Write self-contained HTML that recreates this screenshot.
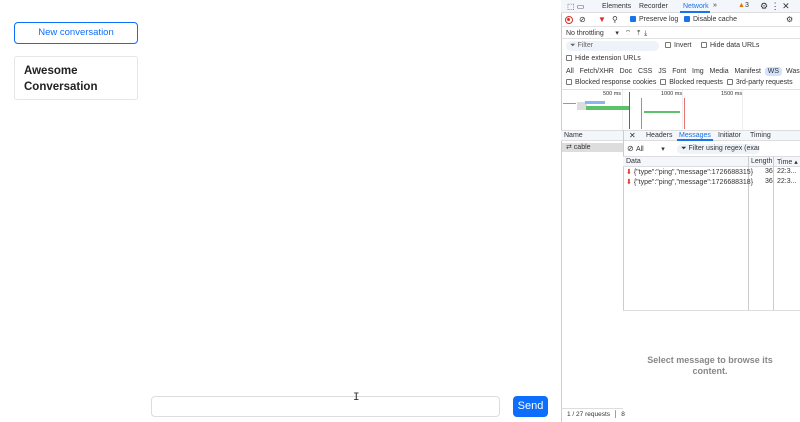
<!DOCTYPE html>
<html><head><style>
*{box-sizing:border-box;margin:0;padding:0}
body{width:800px;height:422px;overflow:hidden;background:#fff;font-family:"Liberation Sans",sans-serif;position:relative}
.a{position:absolute;white-space:nowrap}
.dt{font-size:7px;color:#333}
.cb{display:inline-block;width:6px;height:6px;border:1px solid #777;border-radius:1px;vertical-align:-1px;margin-right:3px}
.cbc{background:#1a73e8;border-color:#1a73e8}
.vl{position:absolute;width:1px;background:#ccc}
</style></head><body>
<div class="a" style="left:14px;top:22px;width:124px;height:22px;border:1px solid #0d6efd;border-radius:4px;color:#0d6efd;font-size:9.5px;text-align:center;line-height:20px">New conversation</div>
<div class="a" style="left:14px;top:56px;width:124px;height:44px;border:1px solid #e6e6e6;border-radius:3px;font-weight:bold;font-size:11.5px;line-height:16px;padding:6px 9px;color:#222;white-space:normal">Awesome Conversation</div>
<div class="a" style="left:151px;top:396px;width:349px;height:21px;border:1px solid #ddd;border-radius:4px"></div>
<div class="a" style="left:353px;top:392px;font-size:11px;color:#333;font-family:'Liberation Mono',monospace">I</div>
<div class="a" style="left:513px;top:396px;width:35px;height:21px;background:#0d6efd;border-radius:4px;color:#fff;font-size:11px;text-align:center;line-height:21px">Send</div>

<div class="a" style="left:561px;top:0;width:239px;height:422px;border-left:1px solid #ccc;background:#fff"></div>
<div class="a" style="left:561px;top:0;width:239px;height:13px;background:#f3f6fb;border-bottom:1px solid #ddd"></div>
<div class="a dt" style="left:567px;top:2px;font-size:8px">⬚ ▭</div>
<div class="a dt" style="left:602px;top:3px">Elements</div>
<div class="a dt" style="left:639px;top:3px">Recorder</div>
<div class="a dt" style="left:683px;top:3px;color:#1a73e8">Network</div>
<div class="a" style="left:680px;top:11px;width:30px;height:2px;background:#1a73e8"></div>
<div class="a dt" style="left:713px;top:2px">»</div>
<div class="a dt" style="left:738px;top:2px;color:#e37400">▲<span style="color:#333">3</span></div>
<div class="a dt" style="left:760px;top:1px;font-size:9px">⚙ ⋮ ✕</div>

<div class="a" style="left:565px;top:16px;width:8px;height:8px;border-radius:50%;border:1.5px solid #d93025"><div style="margin:1px;width:3px;height:3px;border-radius:50%;background:#d93025"></div></div>
<div class="a dt" style="left:579px;top:15px;font-size:8px">⊘</div>
<div class="a dt" style="left:598px;top:15px;color:#d93025;font-size:8px">▼</div>
<div class="a dt" style="left:612px;top:15px;font-size:8px">⚲</div>
<div class="a dt" style="left:630px;top:16px"><span class="cb cbc"></span>Preserve log</div>
<div class="a dt" style="left:684px;top:16px"><span class="cb cbc"></span>Disable cache</div>
<div class="a dt" style="left:786px;top:15px;font-size:8px">⚙</div>
<div class="a" style="left:561px;top:26px;width:239px;height:1px;background:#e0e0e0"></div>
<div class="a dt" style="left:566px;top:29px">No throttling &nbsp;&nbsp;&nbsp;&nbsp;&nbsp;▾ &nbsp;&nbsp;⌔ &nbsp;&nbsp;⤒ &nbsp;⤓</div>
<div class="a" style="left:561px;top:38px;width:239px;height:1px;background:#e0e0e0"></div>
<div class="a dt" style="left:566px;top:41px;width:93px;height:10px;background:#eef2f9;border-radius:6px;padding-left:4px;line-height:10px;color:#666">⏷ Filter</div>
<div class="a dt" style="left:665px;top:42px"><span class="cb"></span>Invert</div>
<div class="a dt" style="left:701px;top:42px"><span class="cb"></span>Hide data URLs</div>
<div class="a dt" style="left:566px;top:55px"><span class="cb"></span>Hide extension URLs</div>
<div class="a dt" style="left:566px;top:68px;word-spacing:0">All &nbsp;&nbsp;Fetch/XHR &nbsp;&nbsp;Doc &nbsp;&nbsp;CSS &nbsp;&nbsp;JS &nbsp;&nbsp;Font &nbsp;&nbsp;Img &nbsp;&nbsp;Media &nbsp;&nbsp;Manifest &nbsp;<span style="background:#d3e3fd;padding:1px 3px;border-radius:3px">WS</span> &nbsp;Wasm</div>
<div class="a dt" style="left:566px;top:79px"><span class="cb"></span>Blocked response cookies &nbsp;<span class="cb"></span>Blocked requests &nbsp;<span class="cb"></span>3rd-party requests</div>
<div class="a" style="left:561px;top:89px;width:239px;height:1px;background:#e0e0e0"></div>
<div class="a dt" style="left:603px;top:91px;font-size:5.5px">500 ms</div>
<div class="a dt" style="left:661px;top:91px;font-size:5.5px">1000 ms</div>
<div class="a dt" style="left:721px;top:91px;font-size:5.5px">1500 ms</div>
<div class="vl" style="left:622px;top:90px;height:40px;background:#eee"></div>
<div class="vl" style="left:682px;top:90px;height:40px;background:#eee"></div>
<div class="vl" style="left:742px;top:90px;height:40px;background:#eee"></div>
<div class="a" style="left:563px;top:103px;width:13px;height:1px;background:#3c9"></div>
<div class="a" style="left:577px;top:102px;width:10px;height:8px;background:#ddd"></div>
<div class="a" style="left:585px;top:101px;width:20px;height:3px;background:#8ab4f8"></div>
<div class="a" style="left:586px;top:106px;width:44px;height:4px;background:#5bc26a"></div>
<div class="vl" style="left:629px;top:92px;height:37px;background:#1a73e8"></div>
<div class="vl" style="left:641px;top:98px;height:31px;background:#e57373"></div>
<div class="a" style="left:644px;top:111px;width:36px;height:2px;background:#5bc26a"></div>
<div class="vl" style="left:684px;top:98px;height:31px;background:#e57373"></div>
<div class="a" style="left:561px;top:130px;width:239px;height:11px;background:#f3f6fb;border-top:1px solid #ddd;border-bottom:1px solid #ddd"></div>
<div class="a dt" style="left:564px;top:132px">Name</div>
<div class="a dt" style="left:629px;top:131px;font-size:8px">✕</div>
<div class="a dt" style="left:646px;top:132px">Headers</div>
<div class="a dt" style="left:679px;top:132px;color:#1a73e8">Messages</div>
<div class="a" style="left:677px;top:139px;width:36px;height:2px;background:#1a73e8"></div>
<div class="a dt" style="left:718px;top:132px">Initiator</div>
<div class="a dt" style="left:750px;top:132px">Timing</div>
<div class="vl" style="left:623px;top:130px;height:180px"></div>
<div class="a dt" style="left:562px;top:143px;width:61px;height:9px;background:#ddd;padding-left:4px">⇄ cable</div>
<div class="a dt" style="left:627px;top:144px;font-size:8px">⊘ <span style="font-size:7px">All &nbsp;&nbsp;&nbsp;&nbsp;&nbsp;&nbsp;&nbsp;&nbsp;▾</span></div>
<div class="a dt" style="left:677px;top:144px;width:83px;height:10px;background:#eef2f9;border-radius:6px;padding-left:4px;line-height:10px;overflow:hidden">⏷ Filter using regex (examp</div>
<div class="a" style="left:623px;top:156px;width:177px;height:11px;background:#f3f6fb;border-top:1px solid #ddd;border-bottom:1px solid #ddd"></div>
<div class="a dt" style="left:626px;top:158px">Data</div>
<div class="a dt" style="left:751px;top:158px">Length</div>
<div class="a dt" style="left:777px;top:158px">Time ▴</div>
<div class="vl" style="left:748px;top:156px;height:154px"></div>
<div class="vl" style="left:773px;top:156px;height:154px"></div>
<div class="a dt" style="left:626px;top:168px"><span style="color:#d93025">⬇</span> {"type":"ping","message":1726688315}</div>
<div class="a dt" style="left:765px;top:168px">36</div>
<div class="a dt" style="left:777px;top:168px">22:3...</div>
<div class="a dt" style="left:626px;top:178px"><span style="color:#d93025">⬇</span> {"type":"ping","message":1726688318}</div>
<div class="a dt" style="left:765px;top:178px">36</div>
<div class="a dt" style="left:777px;top:178px">22:3...</div>
<div class="a" style="left:623px;top:310px;width:177px;height:1px;background:#ddd"></div>
<div class="a" style="left:640px;top:355px;width:140px;text-align:center;font-weight:bold;font-size:9px;color:#888;white-space:normal;line-height:11px">Select message to browse its content.</div>
<div class="a" style="left:561px;top:408px;width:62px;height:1px;background:#ddd"></div>
<div class="a dt" style="left:567px;top:411px;font-size:6.5px">1 / 27 requests &nbsp;│ &nbsp;8</div>
</body></html>
